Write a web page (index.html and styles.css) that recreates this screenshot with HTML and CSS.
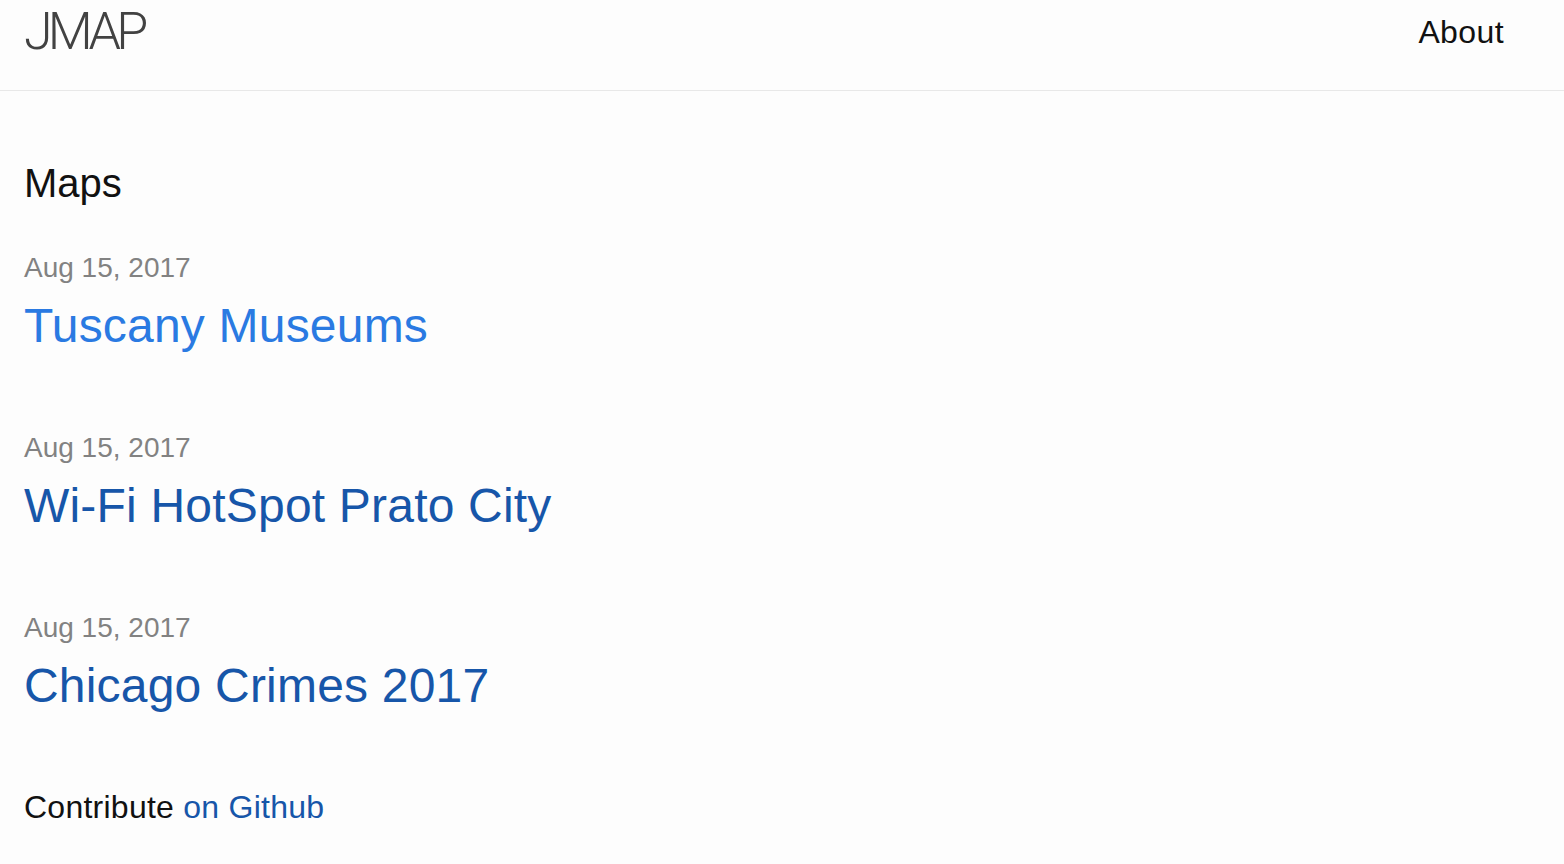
FILE: index.html
```html
<!DOCTYPE html>
<html lang="en">
<head>
<meta charset="utf-8">
<title>JMAP</title>
<link rel="stylesheet" href="styles.css">
</head>
<body>
<header class="site-header">
  <a class="site-title" href="#">JMAP</a>
  <nav class="site-nav">
    <a class="page-link" href="#">About</a>
  </nav>
</header>
<main class="page-content">
  <h1 class="page-heading">Maps</h1>
  <ul class="post-list">
    <li class="post-item">
      <span class="post-meta">Aug 15, 2017</span>
      <h2 class="post-title"><a class="post-link" href="#">Tuscany Museums</a></h2>
    </li>
    <li class="post-item">
      <span class="post-meta">Aug 15, 2017</span>
      <h2 class="post-title"><a class="post-link visited" href="#">Wi-Fi HotSpot Prato City</a></h2>
    </li>
    <li class="post-item">
      <span class="post-meta">Aug 15, 2017</span>
      <h2 class="post-title"><a class="post-link visited" href="#">Chicago Crimes 2017</a></h2>
    </li>
  </ul>
  <p class="contribute">Contribute <a class="visited-link" href="#">on Github</a></p>
</main>
</body>
</html>
```
FILE: styles.css
```css
html, body {
  margin: 0;
  padding: 0;
  background: #fdfdfd;
}
body {
  font-family: "Liberation Sans", Arial, Helvetica, sans-serif;
  color: #111111;
}
a {
  text-decoration: none;
}
.site-header {
  box-sizing: border-box;
  height: 91px;
  border-bottom: 1px solid #e8e8e8;
  display: flex;
  justify-content: space-between;
  align-items: flex-start;
  padding: 0 60px 0 24px;
}
.site-title {
  font-family: Roboto, "Liberation Sans", sans-serif;
  font-weight: 300;
  font-size: 52px;
  line-height: 64px;
  letter-spacing: -4.8px;
  color: #424242;
}
.site-nav {
  display: flex;
}
.page-link {
  font-size: 32px;
  line-height: 64px;
  letter-spacing: 0.4px;
  color: #111111;
}
.page-content {
  padding: 0 24px;
}
.page-heading {
  margin: 68px 0 0;
  font-size: 40px;
  font-weight: 400;
  line-height: 48px;
}
.post-list {
  list-style: none;
  margin: 40px 0 0;
  padding: 0;
  display: flex;
  flex-direction: column;
  gap: 72px;
}
.post-item {
  display: flex;
  flex-direction: column;
  gap: 8px;
}
.post-meta {
  font-size: 28px;
  line-height: 42px;
  color: #828282;
}
.post-title {
  margin: 0;
  font-size: 48px;
  font-weight: 400;
  line-height: 58px;
  letter-spacing: 0.2px;
}
.post-link {
  color: #2a7ae2;
}
.post-link.visited,
.visited-link {
  color: #1756a9;
}
.contribute {
  margin: 68px 0 0;
  font-size: 32px;
  line-height: 48px;
  letter-spacing: 0.25px;
}
```
